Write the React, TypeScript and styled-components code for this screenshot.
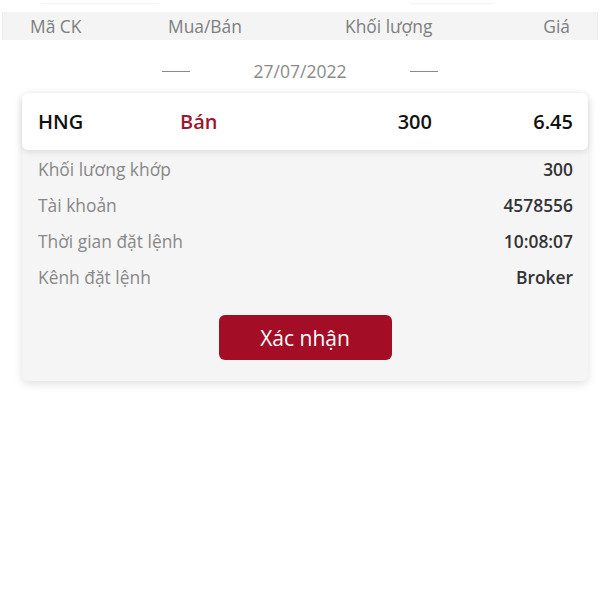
import React from "react";
import styled, { createGlobalStyle } from "styled-components";

const Global = createGlobalStyle`
  html, body { margin: 0; padding: 0; background: #ffffff; }
  body { font-family: "Open Sans", "Noto Sans", sans-serif; }
`;

const Page = styled.div`
  width: 600px;
  min-height: 600px;
  background: #fff;
`;

const TabStrip = styled.div`
  height: 12px;
  display: flex;
  justify-content: space-between;
  padding: 0 105px 0 40px;
`;

const TabPill = styled.div<{ w: number }>`
  width: ${(p) => p.w}px;
  height: 3px;
  border-radius: 0 0 10px 10px;
  box-shadow: 0 1px 2px rgba(0, 0, 0, 0.06);
  background: #fff;
`;

const HeaderBar = styled.div`
  height: 28px;
  background: #f4f4f4;
  display: grid;
  grid-template-columns: 138px 177px 1fr auto;
  align-items: center;
  padding: 0 27px;
  border-left: 1px solid #ececec;
  border-right: 1px solid #ececec;
  margin: 0 2px;
`;

const HeadLabel = styled.span<{ right?: boolean }>`
  font-size: 17.4px;
  color: #7e7e7e;
  text-align: ${(p) => (p.right ? "right" : "left")};
  white-space: nowrap;
`;

const DateRow = styled.div`
  height: 44px;
  padding-top: 9px;
  display: flex;
  align-items: center;
  justify-content: center;
  gap: 64px;
`;

const Dash = styled.span`
  width: 28px;
  height: 1px;
  background: #8a8a8a;
`;

const DateText = styled.span`
  font-size: 17.5px;
  color: #8a8a8a;
`;

const Card = styled.div`
  margin: 0 12px 0 22px;
  background: #f5f5f6;
  border-radius: 6px;
  box-shadow: 0 3px 10px rgba(0, 0, 0, 0.12);
  padding-bottom: 21px;
`;

const OrderRow = styled.div`
  height: 57px;
  background: #fff;
  border-radius: 6px;
  box-shadow: 0 2px 6px rgba(0, 0, 0, 0.1);
  display: grid;
  grid-template-columns: 142px 1fr 1fr 141px;
  align-items: center;
  padding: 0 15px 0 16px;
`;

const OrderCell = styled.span<{ tone?: "red"; right?: boolean }>`
  font-size: 20px;
  font-weight: 600;
  color: ${(p) => (p.tone === "red" ? "#9c1630" : "#111")};
  text-align: ${(p) => (p.right ? "right" : "left")};
`;

const Details = styled.div`
  padding: 1px 15px 0 16px;
`;

const DetailRow = styled.div`
  height: 36px;
  display: flex;
  align-items: center;
  justify-content: space-between;
`;

const DetailLabel = styled.span`
  font-size: 17.4px;
  color: #888;
`;

const DetailValue = styled.span`
  font-size: 17.4px;
  font-weight: 600;
  color: #333;
`;

const Actions = styled.div`
  display: flex;
  justify-content: center;
  padding-top: 20px;
`;

const ConfirmButton = styled.button`
  width: 173px;
  height: 45px;
  border: none;
  border-radius: 6px;
  background: #a30d25;
  color: #fff;
  font-family: "Open Sans", "Noto Sans", sans-serif;
  font-size: 21px;
  font-weight: 500;
  padding: 0;
  cursor: pointer;
`;

const details = [
  { label: "Khối lương khớp", value: "300" },
  { label: "Tài khoản", value: "4578556" },
  { label: "Thời gian đặt lệnh", value: "10:08:07" },
  { label: "Kênh đặt lệnh", value: "Broker" },
];

export default function App() {
  return (
    <Page>
      <Global />
      <TabStrip>
        <TabPill w={120} />
        <TabPill w={85} />
      </TabStrip>
      <HeaderBar>
        <HeadLabel>Mã CK</HeadLabel>
        <HeadLabel>Mua/Bán</HeadLabel>
        <HeadLabel>Khối lượng</HeadLabel>
        <HeadLabel right>Giá</HeadLabel>
      </HeaderBar>
      <DateRow>
        <Dash />
        <DateText>27/07/2022</DateText>
        <Dash />
      </DateRow>
      <Card>
        <OrderRow>
          <OrderCell>HNG</OrderCell>
          <OrderCell tone="red">Bán</OrderCell>
          <OrderCell right>300</OrderCell>
          <OrderCell right>6.45</OrderCell>
        </OrderRow>
        <Details>
          {details.map((d) => (
            <DetailRow key={d.label}>
              <DetailLabel>{d.label}</DetailLabel>
              <DetailValue>{d.value}</DetailValue>
            </DetailRow>
          ))}
        </Details>
        <Actions>
          <ConfirmButton>Xác nhận</ConfirmButton>
        </Actions>
      </Card>
    </Page>
  );
}
